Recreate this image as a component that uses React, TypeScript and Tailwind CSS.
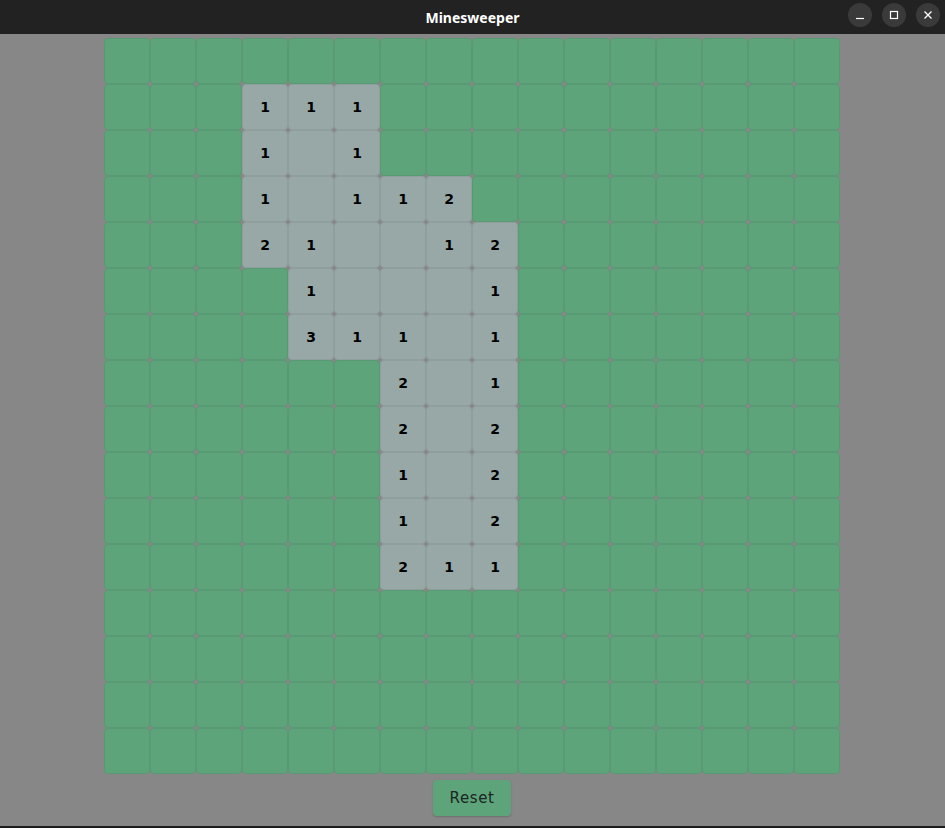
import React from "react";

const revealed: Record<string, string> = {
  "1,3": "1", "1,4": "1", "1,5": "1",
  "2,3": "1", "2,4": "", "2,5": "1",
  "3,3": "1", "3,4": "", "3,5": "1", "3,6": "1", "3,7": "2",
  "4,3": "2", "4,4": "1", "4,5": "", "4,6": "", "4,7": "1", "4,8": "2",
  "5,4": "1", "5,5": "", "5,6": "", "5,7": "", "5,8": "1",
  "6,4": "3", "6,5": "1", "6,6": "1", "6,7": "", "6,8": "1",
  "7,6": "2", "7,7": "", "7,8": "1",
  "8,6": "2", "8,7": "", "8,8": "2",
  "9,6": "1", "9,7": "", "9,8": "2",
  "10,6": "1", "10,7": "", "10,8": "2",
  "11,6": "2", "11,7": "1", "11,8": "1",
};

export default function App() {
  const cells = [];
  for (let r = 0; r < 16; r++) {
    for (let c = 0; c < 16; c++) {
      const key = `${r},${c}`;
      const isRev = key in revealed;
      cells.push(
        <div
          key={key}
          className={
            isRev
              ? "w-[46px] h-[46px] rounded-[4px] border border-[#8f9f9d] bg-[#98a8a6] flex items-center justify-center text-[14px] font-bold text-black"
              : "w-[46px] h-[46px] rounded-[4px] border border-[#589a73] bg-[#5ea47b]"
          }
          style={{ fontFamily: '"DejaVu Sans", sans-serif' }}
        >
          {isRev ? revealed[key] : null}
        </div>
      );
    }
  }

  return (
    <div className="w-[945px] h-[828px] bg-[#878787] flex flex-col overflow-hidden">
      <div className="h-[34px] bg-[#222222] relative flex items-center justify-center shrink-0">
        <span
          className="text-white text-[14px] font-bold"
          style={{ fontFamily: '"Noto Sans", sans-serif' }}
        >
          Minesweeper
        </span>
        <div className="absolute right-[5px] top-[3px] flex gap-[10px]">
          <div className="w-[24px] h-[24px] rounded-full bg-[#3a3a3a] flex items-center justify-center">
            <svg width="10" height="10" viewBox="0 0 10 10">
              <line x1="1" y1="8.5" x2="9" y2="8.5" stroke="white" strokeWidth="1.2" />
            </svg>
          </div>
          <div className="w-[24px] h-[24px] rounded-full bg-[#3a3a3a] flex items-center justify-center">
            <svg width="10" height="10" viewBox="0 0 10 10">
              <rect x="1.5" y="1.5" width="7" height="7" fill="none" stroke="white" strokeWidth="1.2" />
            </svg>
          </div>
          <div className="w-[24px] h-[24px] rounded-full bg-[#3a3a3a] flex items-center justify-center">
            <svg width="10" height="10" viewBox="0 0 10 10">
              <path d="M1.5 1.5 L8.5 8.5 M8.5 1.5 L1.5 8.5" stroke="white" strokeWidth="1.3" />
            </svg>
          </div>
        </div>
      </div>
      <div className="flex flex-col pt-[4px] pl-[104px] gap-[6px]">
        <div className="grid grid-cols-[repeat(16,46px)] w-[736px]">{cells}</div>
        <button
          className="ml-[329px] w-[78px] h-[36px] rounded-[4px] bg-[#5ea47b] text-[#1a2620] text-[15px] tracking-[0.6px] shadow-[0_1px_2px_rgba(0,0,0,0.2)]"
          style={{ fontFamily: '"DejaVu Sans", sans-serif' }}
        >
          Reset
        </button>
      </div>
      <div className="mt-auto h-[2px] bg-[#1e1e1e]" />
    </div>
  );
}
